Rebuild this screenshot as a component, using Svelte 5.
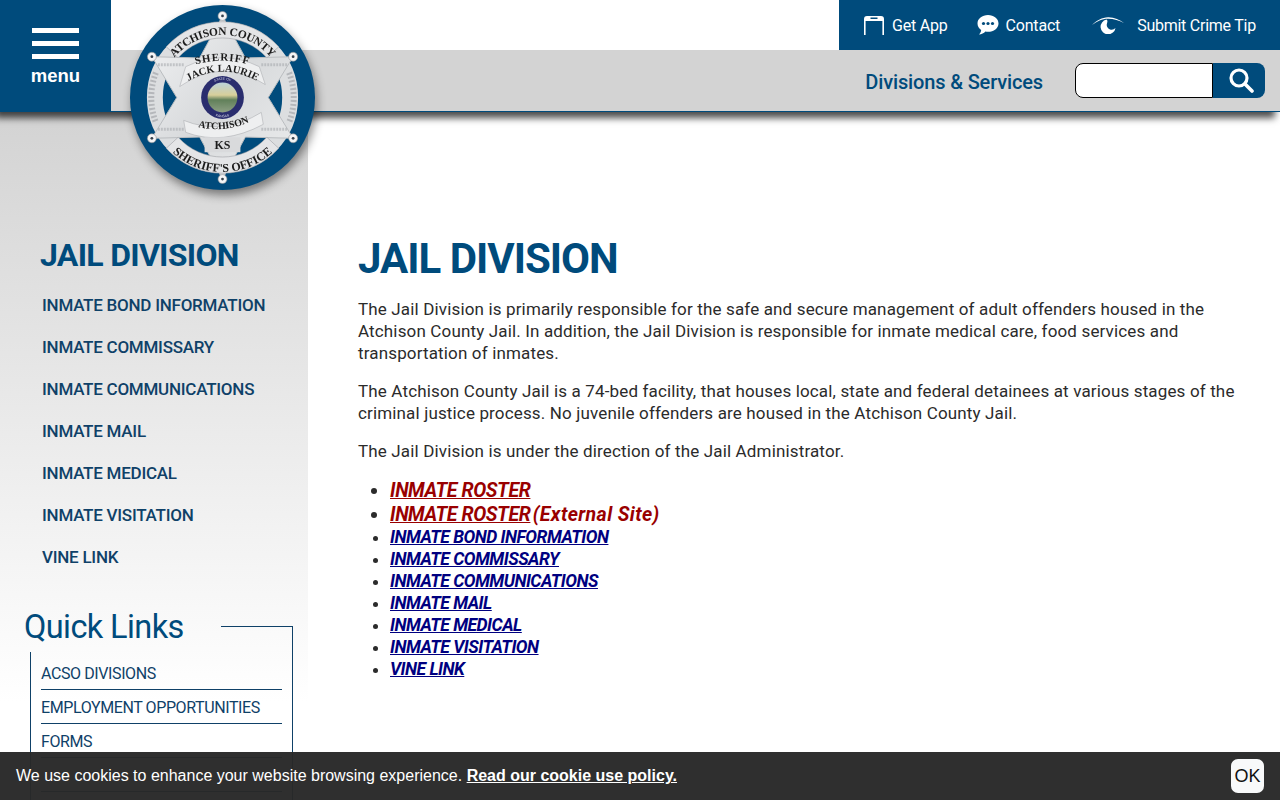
<script lang="ts">
	const sideLinks = [
		"INMATE BOND INFORMATION",
		"INMATE COMMISSARY",
		"INMATE COMMUNICATIONS",
		"INMATE MAIL",
		"INMATE MEDICAL",
		"INMATE VISITATION",
		"VINE LINK",
	];
	// the last row sits behind the cookie bar, only its rule shows
	const quickLinks = ["ACSO DIVISIONS", "EMPLOYMENT OPPORTUNITIES", "FORMS", ""];
	// star tips, same order as the balls on the badge
	const tips = [0, 60, 120, 180, 240, 300].map((a) => {
		const r = (a * Math.PI) / 180;
		return [93 + 82 * Math.sin(r), 93 - 82 * Math.cos(r)];
	});
	const starPoints = Array.from({ length: 12 }, (_, i) => {
		const r = (i * 30 * Math.PI) / 180;
		const d = i % 2 ? 46 : 82;
		return `${(93 + d * Math.sin(r)).toFixed(1)},${(93 - d * Math.cos(r)).toFixed(1)}`;
	}).join(" ");
</script>

<div class="page">
	<header class="top">
		<button class="menu">
			<span class="bar"></span>
			<span class="bar"></span>
			<span class="bar"></span>
			<span class="menu-label">menu</span>
		</button>
		<div class="top-right">
			<div class="tools-row">
				<nav class="tools">
					<a href="#app" class="tool">
						<svg width="22" height="20" viewBox="0 0 22 20">
							<path d="M1 20V4a3 3 0 0 1 3-3h14a3 3 0 0 1 3 3v16h-1.6V6H2.6v14z" fill="#fff" />
							<rect x="7.500" y="2.500" width="7" height="1.500" fill="#004b7c" />
						</svg>
						<span>Get App</span>
					</a>
					<a href="#app" class="tool">
						<svg width="22" height="20" viewBox="0 0 22 20">
							<path d="M11 0c5.800 0 10.500 3.700 10.500 8.400S16.800 16.800 11 16.800c-.9 0-1.800-.1-2.600-.3C6.800 18.200 4.600 19.400 2 19.600c1.200-1.300 2-2.800 2.200-4.600C2 13.500.5 11.100.5 8.400.5 3.700 5.200 0 11 0z" fill="#fff" />
							<circle cx="6.500" cy="8.500" r="1.600" fill="#004b7c" />
							<circle cx="11" cy="8.500" r="1.600" fill="#004b7c" />
							<circle cx="15.500" cy="8.500" r="1.600" fill="#004b7c" />
						</svg>
						<span>Contact</span>
					</a>
					<a href="#app" class="tool tip">
						<svg width="32" height="18" viewBox="0 0 32 18">
							<path d="M0 9C5 4 10 1.500 16 1.200 22 1 27.500 3.500 32 7 27 4.500 22 2.800 16 2.800 10 2.800 5 5.500 0 9z" fill="#fff" />
							<path d="M14.500 3.500a7.500 7.500 0 1 0 9 8.500 5.500 5.500 0 0 1-5.500 1.400 4.600 4.600 0 0 1-3-5.900c.3-1.500 1-2.800-.5-4z" fill="#fff" />
						</svg>
						<span>Submit Crime Tip</span>
					</a>
				</nav>
			</div>
			<div class="search-row">
				<a href="#app" class="divisions">Divisions &amp; Services</a>
				<div class="search">
					<input type="text" aria-label="Search" />
					<button aria-label="Search">
						<svg width="26" height="26" viewBox="0 0 26 26">
							<circle cx="11" cy="11" r="8" fill="none" stroke="#fff" stroke-width="3.200" />
							<path d="M17 17l7 7" stroke="#fff" stroke-width="3.600" stroke-linecap="round" />
						</svg>
					</button>
				</div>
			</div>
		</div>
	</header>

	<svg class="badge" width="185" height="185" viewBox="0 0 186 186">
		<defs>
			<linearGradient id="silver" x1="0" y1="0" x2="1" y2="1">
				<stop offset="0" stop-color="#f2f3f4" />
				<stop offset="0.5" stop-color="#d8dadc" />
				<stop offset="1" stop-color="#ecedee" />
			</linearGradient>
			<linearGradient id="land" x1="0" y1="0" x2="0" y2="1">
				<stop offset="0" stop-color="#bcd3da" />
				<stop offset="0.42" stop-color="#d8cf9a" />
				<stop offset="0.58" stop-color="#61805a" />
				<stop offset="1" stop-color="#8d9f84" />
			</linearGradient>
			<path id="arc-top" d="M31 82A63 63 0 0 1 155 82" />
			<path id="arc-bottom" d="M20 106A74 74 0 0 0 166 106" />
			<path id="arc-sheriff" d="M60 62Q93 50 126 62" />
			<path id="arc-jack" d="M56 78Q93 56 130 78" />
			<path id="arc-atchison" d="M60 120Q93 132 128 114" />
			<path id="arc-state" d="M77 85A18 18 0 0 1 109 85" />
			<path id="arc-kansas" d="M75 100A19 19 0 0 0 111 100" />
		</defs>
		<circle cx="93" cy="93" r="93" fill="#004b7c" />
		<circle cx="93" cy="93" r="68" fill="none" stroke="#dcdee0" stroke-width="16" />
		<polygon points={starPoints} fill="url(#silver)" stroke="#b9bcc0" stroke-width="1" />
		<!-- wreaths down both sides -->
		<path d="M26 68A70 70 0 0 0 26 118M160 68A70 70 0 0 1 160 118" fill="none" stroke="#a4a7ab" stroke-width="6" stroke-dasharray="2 2" opacity=".7" />
		<path d="M28 60H54M132 60H158M28 125H54M132 125H158" stroke="#a9acb0" stroke-width="3" stroke-dasharray="2 1" opacity=".6" />
		<path d="M36.500 42A76 76 0 0 1 149.500 42L137.600 53A60 60 0 0 0 48.400 53z" fill="#e4e5e7" stroke="#9ea1a5" stroke-width=".6" />
		<path d="M36.500 144A76 76 0 0 0 149.500 144L137.600 133A60 60 0 0 1 48.400 133z" fill="#e4e5e7" stroke="#9ea1a5" stroke-width=".6" />
		<path d="M56 62Q93 44 130 62L136 80Q93 52 50 82z" fill="#eeeff0" stroke="#a3a6aa" stroke-width=".5" />
		<path d="M54 116Q93 132 132 108L134 120Q93 142 56 128z" fill="#eeeff0" stroke="#a3a6aa" stroke-width=".5" />
		<rect x="75" y="133" width="36" height="15" fill="#d9dadc" />
		<circle cx="93" cy="93" r="21.500" fill="#2a2d6e" />
		<circle cx="93" cy="93" r="15" fill="url(#land)" />
		{#each tips as t}
			<circle cx={t[0]} cy={t[1]} r="4.500" fill="#f4f4f5" stroke="#8b8e92" stroke-width=".6" />
			<circle cx={t[0]} cy={t[1]} r="1.400" fill="#34404c" />
		{/each}
		<g class="badge-text">
			<text font-size="11.500" letter-spacing="-0.2"><textPath href="#arc-top" startOffset="50%">ATCHISON COUNTY</textPath></text>
			<text font-size="12"><textPath href="#arc-bottom" startOffset="50%">SHERIFF'S OFFICE</textPath></text>
			<text font-size="11" letter-spacing="1"><textPath href="#arc-sheriff" startOffset="50%">SHERIFF</textPath></text>
			<text font-size="10.500"><textPath href="#arc-jack" startOffset="50%">JACK LAURIE</textPath></text>
			<text font-size="10"><textPath href="#arc-atchison" startOffset="50%">ATCHISON</textPath></text>
			<text x="93" y="145" font-size="12">KS</text>
		</g>
		<text class="seal" font-size="3.500"><textPath href="#arc-state" startOffset="50%">STATE OF</textPath></text>
		<text class="seal" font-size="3.500"><textPath href="#arc-kansas" startOffset="50%">KANSAS</textPath></text>
	</svg>

	<div class="body">
		<aside class="side">
			<h2>JAIL DIVISION</h2>
			<ul class="side-nav">
				{#each sideLinks as link}
					<li><a href="#app">{link}</a></li>
				{/each}
			</ul>
			<section class="quick">
				<h3>Quick Links</h3>
				<ul>
					{#each quickLinks as link}
						<li><a href="#app">{link}</a></li>
					{/each}
				</ul>
			</section>
		</aside>

		<main class="content">
			<h1>JAIL DIVISION</h1>
			<p>The Jail Division is primarily responsible for the safe and secure management of adult offenders housed in the Atchison County Jail. In addition, the Jail Division is responsible for inmate medical care, food services and transportation of inmates.</p>
			<p>The Atchison County Jail is a 74-bed facility, that houses local, state and federal detainees at various stages of the criminal justice process. No juvenile offenders are housed in the Atchison County Jail.</p>
			<p>The Jail Division is under the direction of the Jail Administrator.</p>
			<ul class="links">
				<li class="big"><a href="#app">INMATE ROSTER</a></li>
				<li class="big"><a href="#app">INMATE ROSTER</a> <span class="ext">(External Site)</span></li>
				{#each sideLinks as link}
					<li><a href="#app">{link}</a></li>
				{/each}
			</ul>
		</main>
	</div>

	<div class="cookie">
		<span>We use cookies to enhance your website browsing experience. <a href="#app">Read our cookie use policy.</a></span>
		<button>OK</button>
	</div>
</div>

<style>
	:global(body) {
		margin: 0;
		background: #fff;
	}
	.page {
		position: relative;
		height: 800px;
		overflow: hidden;
		font-family: Roboto, "Liberation Sans", sans-serif;
		color: #2b2b2b;
	}
	a {
		color: inherit;
		text-decoration: none;
	}
	ul {
		margin: 0;
		padding: 0;
		list-style: none;
	}
	button {
		border: 0;
		padding: 0;
		cursor: pointer;
	}

	.top {
		position: relative;
		z-index: 2;
		display: flex;
		height: 112px;
		box-shadow: -5px 6px 7px rgba(0, 0, 0, 0.7);
	}
	.menu {
		width: 111px;
		height: 112px;
		flex: none;
		background: #004b7c;
		color: #fff;
		display: flex;
		flex-direction: column;
		align-items: center;
		padding-top: 28px;
		gap: 8px;
	}
	.bar {
		width: 47px;
		height: 5px;
		background: #fff;
	}
	.menu-label {
		font-family: "Liberation Sans", sans-serif;
		font-weight: 700;
		font-size: 18.500px;
		line-height: 22px;
		margin-top: -2px;
	}
	.top-right {
		flex: 1;
		display: flex;
		flex-direction: column;
		background: #fff;
	}
	.tools-row {
		height: 50px;
		display: flex;
		justify-content: flex-end;
	}
	.tools {
		width: 441px;
		box-sizing: border-box;
		background: #004b7c;
		color: #fff;
		display: flex;
		align-items: center;
		padding-left: 24px;
		font-size: 16px;
	}
	.tool {
		display: flex;
		align-items: center;
		gap: 7px;
		margin-right: 29px;
		letter-spacing: -0.2px;
	}
	.tool.tip {
		gap: 13px;
		margin-left: 3px;
		margin-right: 0;
		letter-spacing: -0.25px;
	}
	.search-row {
		flex: 1;
		background: #d3d3d3;
		border-bottom: 1px solid #004b7c;
		display: flex;
		align-items: center;
		justify-content: flex-end;
		padding-right: 15px;
		padding-bottom: 1px;
	}
	.divisions {
		color: #004b7c;
		font-size: 20px;
		font-weight: 500;
		letter-spacing: -0.15px;
		margin: 4px 32px 0 0;
	}
	.search {
		display: flex;
		width: 190px;
		height: 35px;
	}
	.search input {
		width: 138px;
		box-sizing: border-box;
		border: 1px solid #000;
		border-radius: 8px 0 0 8px;
		background: #fff;
		padding: 0;
		outline: 0;
	}
	.search button {
		flex: 1;
		background: #004b7c;
		border-radius: 0 8px 8px 0;
		display: flex;
		align-items: center;
		justify-content: center;
		padding-left: 3px;
	}

	.badge {
		position: absolute;
		z-index: 3;
		left: 130px;
		top: 5px;
		filter: drop-shadow(2px 5px 5px rgba(0, 0, 0, 0.45));
	}
	.badge-text text {
		font-family: "Liberation Serif", serif;
		font-weight: 700;
		fill: #1c1c1c;
		text-anchor: middle;
	}
	.seal {
		font-family: "Liberation Sans", sans-serif;
		fill: #d9dbe8;
		text-anchor: middle;
	}

	.body {
		display: flex;
		height: 688px;
	}
	.side {
		width: 308px;
		flex: none;
		box-sizing: border-box;
		background: linear-gradient(#d3d3d3, #fff 590px);
		padding-top: 125px;
	}
	.side h2 {
		margin: 0 0 0 40px;
		color: #004b7c;
		font-size: 32px;
		line-height: 36px;
		font-weight: 700;
		letter-spacing: -0.7px;
	}
	.side-nav {
		margin: 11px 0 0 42px;
	}
	.side-nav li {
		height: 42px;
		line-height: 42px;
		font-size: 17px;
		font-weight: 500;
		color: #0f4168;
		letter-spacing: -0.25px;
	}
	.quick {
		position: relative;
		margin: 48px 15px 0 30px;
		height: 300px;
		border-right: 1px solid #0f4168;
	}
	/* left rule starts below the heading, top rule only right of it */
	.quick::before {
		content: "";
		position: absolute;
		top: 0;
		right: 0;
		width: 71px;
		border-top: 1px solid #0f4168;
	}
	.quick::after {
		content: "";
		position: absolute;
		top: 26px;
		bottom: 0;
		left: 0;
		border-left: 1px solid #0f4168;
	}
	.quick h3 {
		margin: 0;
		position: relative;
		left: -6px;
		top: -18px;
		color: #004b7c;
		font-size: 32.500px;
		line-height: 38px;
		font-weight: 400;
		letter-spacing: -0.6px;
	}
	.quick ul {
		margin: -8px 10px 0 11px;
	}
	.quick li {
		height: 33px;
		line-height: 35px;
		border-bottom: 1px solid #0f4168;
		font-size: 16px;
		letter-spacing: -0.4px;
		color: #0f4168;
	}

	.content {
		flex: 1;
		padding: 120px 30px 0 50px;
	}
	.content h1 {
		margin: 0 0 12px;
		color: #004b7c;
		font-size: 42px;
		line-height: 54px;
		font-weight: 700;
		letter-spacing: -1px;
	}
	.content p {
		margin: 0 0 16px;
		font-size: 17px;
		line-height: 22px;
		letter-spacing: 0.15px;
	}
	.links {
		margin-top: 17px;
		padding-left: 32px;
		list-style: disc;
		font-size: 17.500px;
		line-height: 22px;
		font-weight: 700;
		font-style: italic;
		letter-spacing: -0.5px;
	}
	.links a {
		color: #000080;
		text-decoration: underline;
	}
	.links .big {
		font-size: 19.500px;
		line-height: 24px;
		letter-spacing: -0.4px;
	}
	.links .big + .big {
		margin-bottom: -1px;
	}
	.links .big a,
	.ext {
		color: #990000;
	}
	.ext {
		letter-spacing: 0.4px;
		margin-left: -2px;
	}

	.cookie {
		position: absolute;
		z-index: 5;
		left: 0;
		right: 0;
		bottom: 0;
		height: 48px;
		box-sizing: border-box;
		background: rgba(40, 40, 40, 0.97);
		color: #fff;
		display: flex;
		align-items: center;
		justify-content: space-between;
		padding: 0 16px;
		font-family: "Liberation Sans", sans-serif;
		font-size: 16px;
	}
	.cookie a {
		font-weight: 700;
		text-decoration: underline;
	}
	.cookie button {
		width: 33px;
		height: 34px;
		border-radius: 7px;
		background: #f8f9fa;
		color: #111;
		font-family: "Liberation Sans", sans-serif;
		font-size: 18px;
	}
</style>
